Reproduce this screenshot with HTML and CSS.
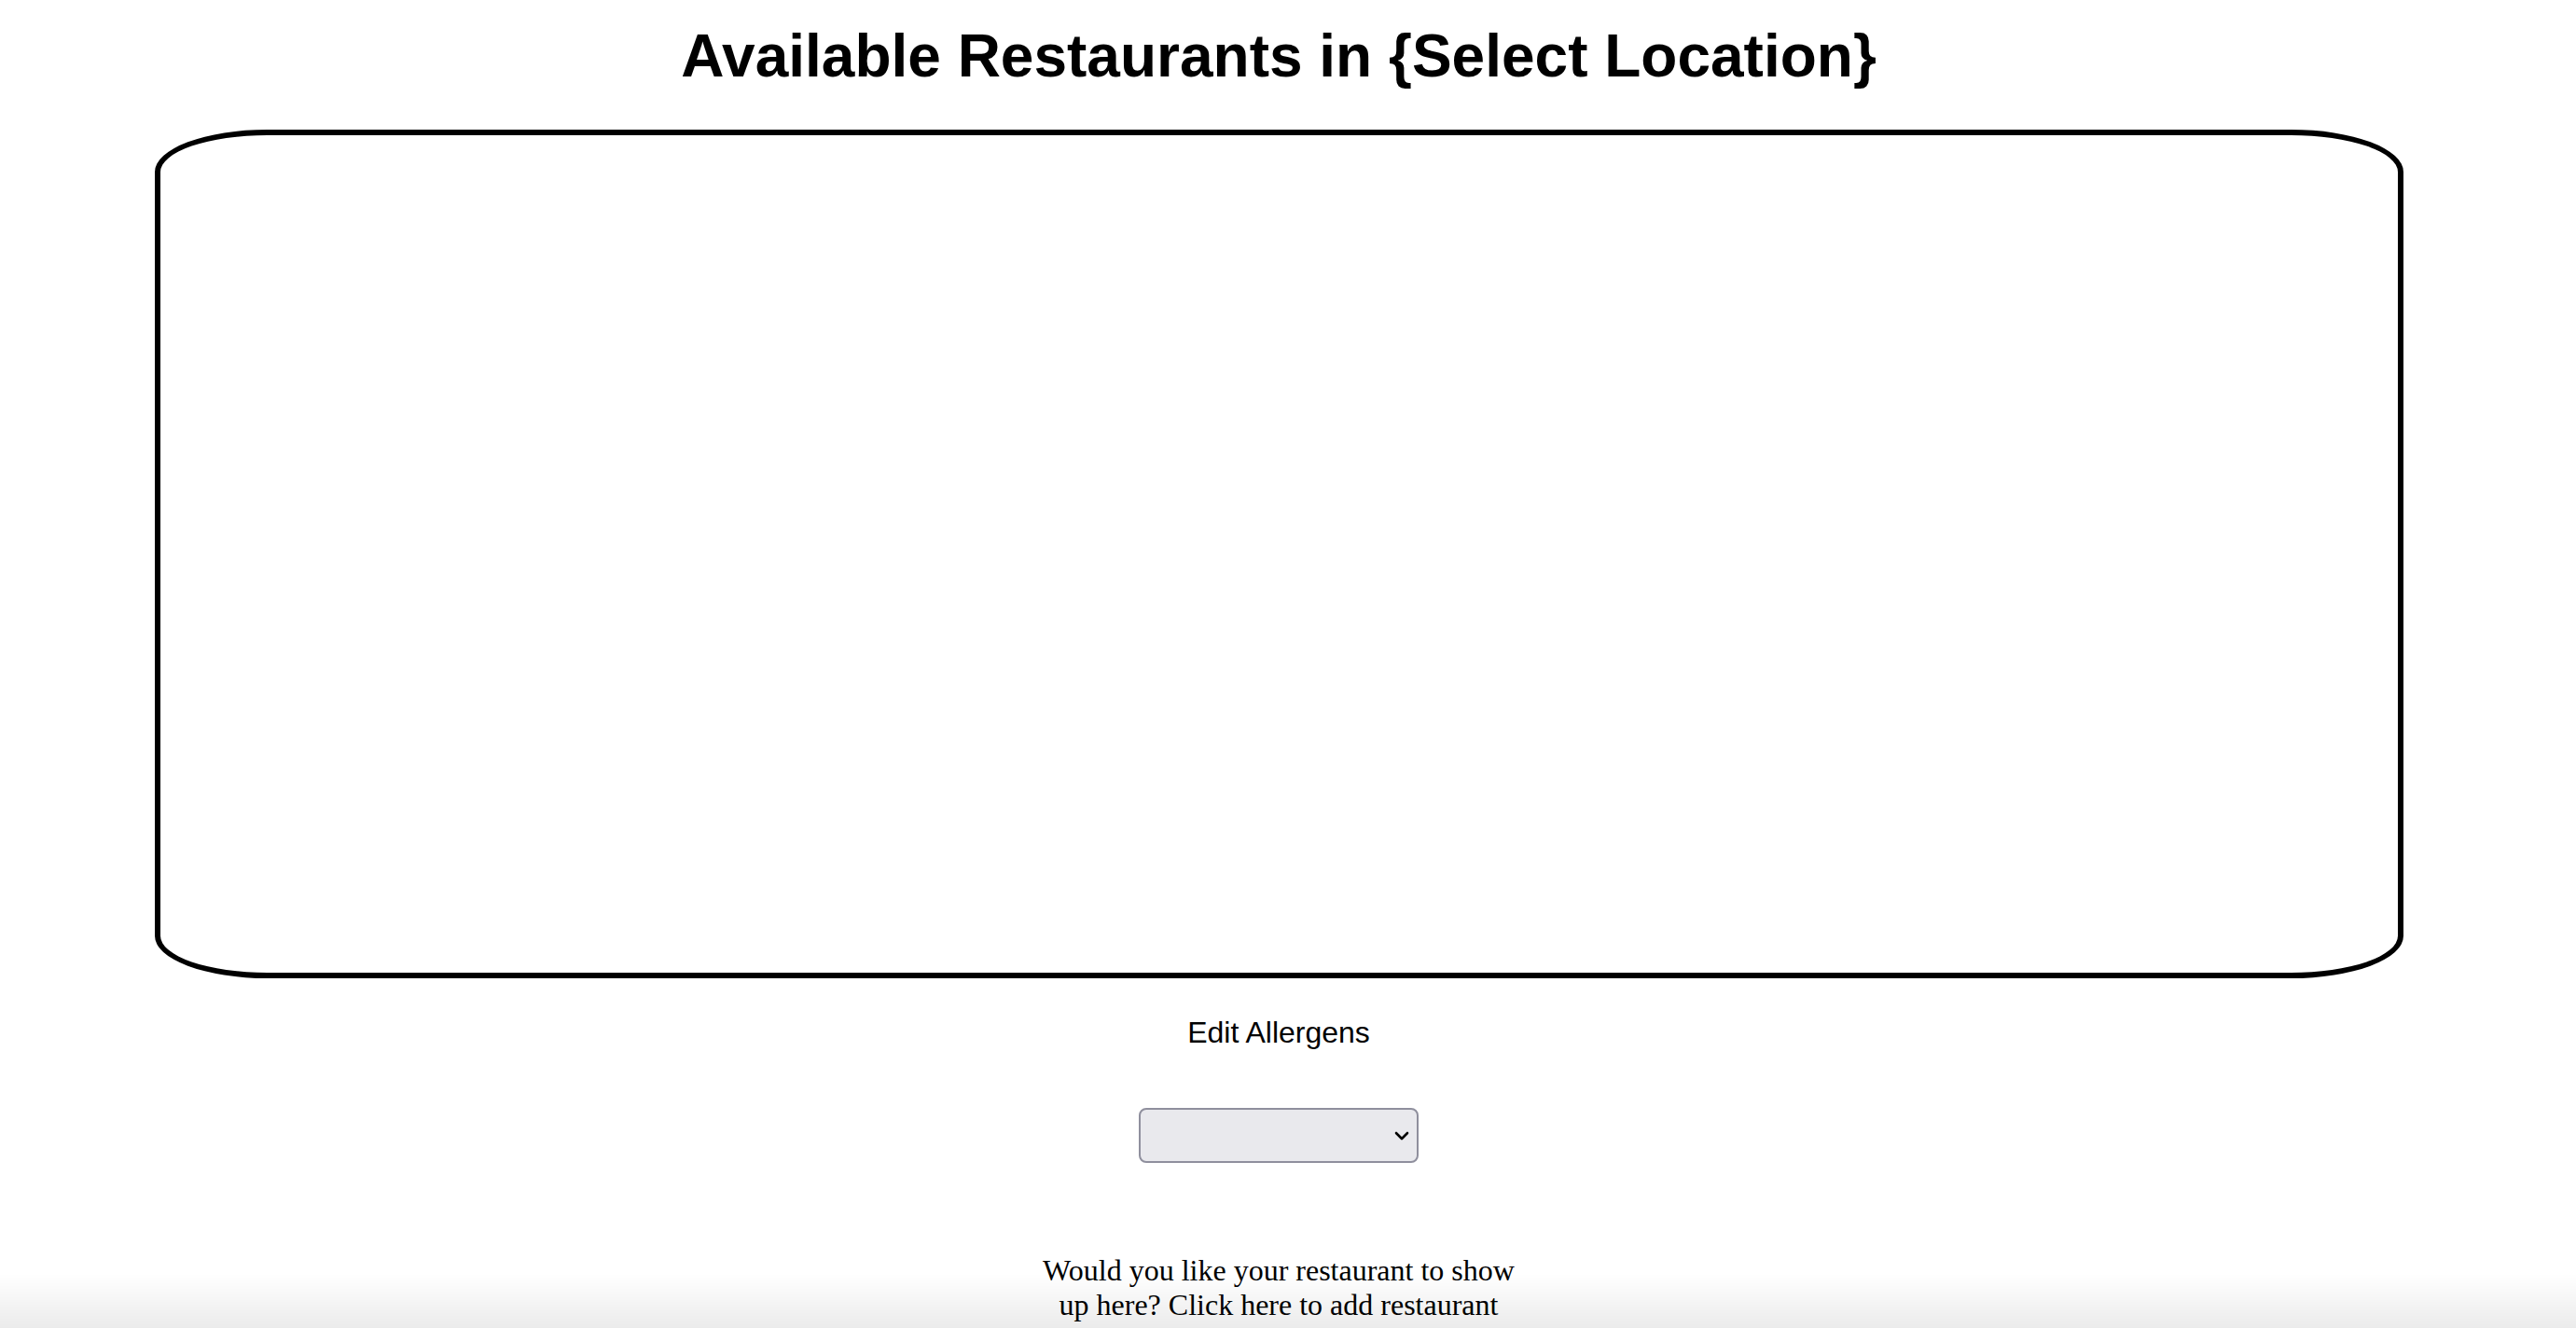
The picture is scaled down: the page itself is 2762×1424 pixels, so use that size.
FILE: index.html
```html
<!DOCTYPE html>
<html lang="en">
<head>
<meta charset="utf-8">
<title>Available Restaurants</title>
<link rel="stylesheet" href="styles.css">
</head>
<body>
<main class="page">
  <h1 class="title">Available Restaurants in {Select Location}</h1>
  <section class="restaurant-list"></section>
  <p class="allergens-label">Edit Allergens</p>
  <div class="select-wrap">
    <select class="allergen-select" aria-label="Allergens"></select>
    <svg class="chevron" width="16" height="10" viewBox="0 0 16 10" aria-hidden="true">
      <path d="M2 2 L8 8 L14 2" fill="none" stroke="#000" stroke-width="2.6" stroke-linecap="round" stroke-linejoin="round"/>
    </svg>
  </div>
  <p class="add-restaurant">Would you like your restaurant to show up here? Click here to add restaurant</p>
</main>
<div class="bottom-fade"></div>
</body>
</html>
```

FILE: styles.css
```css
html, body {
  margin: 0;
  background: #fff;
}

body {
  font-family: "Liberation Serif", "Times New Roman", serif;
  color: #000;
}

.page {
  display: flex;
  flex-direction: column;
  align-items: center;
  padding: 0 36px 0 16px;
}

.title {
  margin: 23px 0 42px;
  font-family: "Liberation Sans", Arial, sans-serif;
  font-weight: bold;
  font-size: 64px;
  line-height: 74px;
  text-align: center;
}

.restaurant-list {
  box-sizing: border-box;
  width: 2411px;
  height: 910px;
  border: 6px solid #000;
  border-radius: 5%;
  flex-shrink: 0;
}

.allergens-label {
  margin: 40px 0 0;
  font-family: "Liberation Sans", Arial, sans-serif;
  font-size: 32px;
  line-height: 37px;
}

.select-wrap {
  position: relative;
  margin-top: 62px;
  width: 300px;
  height: 59px;
}

.allergen-select {
  -webkit-appearance: none;
  appearance: none;
  box-sizing: border-box;
  width: 100%;
  height: 100%;
  margin: 0;
  border: 2px solid #8f8f9d;
  border-radius: 8px;
  background: #e9e9ed;
}

.chevron {
  position: absolute;
  right: 10px;
  top: 50%;
  transform: translateY(-50%);
  pointer-events: none;
}

.add-restaurant {
  margin: 97px 0 0;
  width: 540px;
  text-align: center;
  font-family: "Liberation Serif", "Times New Roman", serif;
  font-size: 32px;
  line-height: 37px;
}

.bottom-fade {
  position: fixed;
  left: 0;
  right: 0;
  bottom: 0;
  height: 58px;
  background: linear-gradient(to bottom, rgba(0, 0, 0, 0), rgba(0, 0, 0, 0.08));
  pointer-events: none;
}
```
